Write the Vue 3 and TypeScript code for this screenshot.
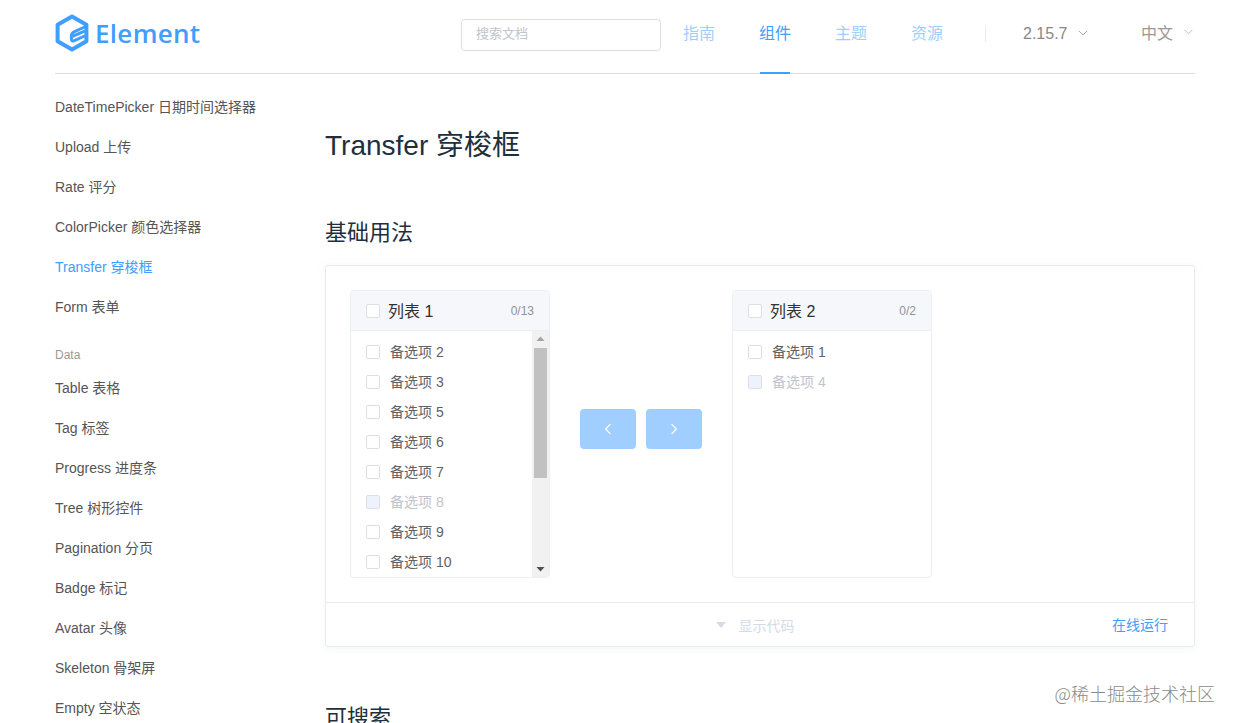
<script setup lang="ts">
interface NavLink { label: string; active?: boolean }
interface Option { label: string; disabled?: boolean }
interface SideEntry { label: string; active?: boolean; group?: boolean }

const navLinks: NavLink[] = [
  { label: '指南' },
  { label: '组件', active: true },
  { label: '主题' },
  { label: '资源' },
]

const sideEntries: SideEntry[] = [
  { label: 'DateTimePicker 日期时间选择器' },
  { label: 'Upload 上传' },
  { label: 'Rate 评分' },
  { label: 'ColorPicker 颜色选择器' },
  { label: 'Transfer 穿梭框', active: true },
  { label: 'Form 表单' },
  { label: 'Data', group: true },
  { label: 'Table 表格' },
  { label: 'Tag 标签' },
  { label: 'Progress 进度条' },
  { label: 'Tree 树形控件' },
  { label: 'Pagination 分页' },
  { label: 'Badge 标记' },
  { label: 'Avatar 头像' },
  { label: 'Skeleton 骨架屏' },
  { label: 'Empty 空状态' },
]

const leftOptions: Option[] = [
  { label: '备选项 2' },
  { label: '备选项 3' },
  { label: '备选项 5' },
  { label: '备选项 6' },
  { label: '备选项 7' },
  { label: '备选项 8', disabled: true },
  { label: '备选项 9' },
  { label: '备选项 10' },
]

const rightOptions: Option[] = [
  { label: '备选项 1' },
  { label: '备选项 4', disabled: true },
]
</script>

<template>
  <div class="page">
    <header class="header">
      <a class="brand">
        <svg class="brand-mark" viewBox="0 0 34 38" width="34" height="38" fill="none">
          <path d="M17 2.4 31.4 10.7V27.3L17 35.6 2.6 27.3V10.7Z" stroke="#409eff" stroke-width="4" stroke-linejoin="round" />
          <path d="M29.5 13 19.6 17.6Q16.4 19.2 16.4 21.8V25Q16.4 28 19.4 26.6L29.5 22" stroke="#409eff" stroke-width="3" stroke-linecap="round" />
          <path d="M18 22.2 29 17.4" stroke="#409eff" stroke-width="3" stroke-linecap="round" />
        </svg>
        <span class="brand-name">Element</span>
      </a>
      <div class="header-right">
        <div class="search">搜索文档</div>
        <nav class="nav">
          <a v-for="link in navLinks" :key="link.label" class="nav-link" :class="{ active: link.active }">
            <span class="nav-text">{{ link.label }}</span>
          </a>
        </nav>
        <span class="divider"></span>
        <span class="picker version">
          2.15.7
          <svg class="chev" viewBox="0 0 10 6" width="10" height="6" fill="none"><path d="M.8.8 5 5 9.2.8" stroke="#a8a8a8" stroke-width="1" /></svg>
        </span>
        <span class="picker lang">
          中文
          <svg class="chev" viewBox="0 0 10 6" width="9" height="6" fill="none"><path d="M.8.8 5 5 9.2.8" stroke="#b8b8b8" stroke-width="1" /></svg>
        </span>
      </div>
    </header>

    <div class="body">
      <aside class="side">
        <div
          v-for="entry in sideEntries"
          :key="entry.label"
          :class="entry.group ? 'side-group' : ['side-item', { active: entry.active }]"
        >{{ entry.label }}</div>
      </aside>

      <main class="main">
        <h2 class="title">Transfer 穿梭框</h2>
        <h3 class="section first">基础用法</h3>

        <section class="demo">
          <div class="source">
            <div class="panel">
              <div class="panel-head">
                <span class="box"></span>
                <span class="panel-title">列表 1</span>
                <span class="count">0/13</span>
              </div>
              <div class="panel-body">
                <ul class="list">
                  <li v-for="o in leftOptions" :key="o.label" class="option" :class="{ disabled: o.disabled }">
                    <span class="box"></span><span class="option-label">{{ o.label }}</span>
                  </li>
                </ul>
                <div class="scrollbar">
                  <svg class="arrow" viewBox="0 0 17 17" width="17" height="17"><path d="M8.5 5.5 12.5 10H4.5Z" fill="#a3a3a3" /></svg>
                  <div class="track"><div class="thumb"></div></div>
                  <svg class="arrow" viewBox="0 0 17 17" width="17" height="17"><path d="M8.5 11.5 12.5 7H4.5Z" fill="#505050" /></svg>
                </div>
              </div>
            </div>

            <div class="buttons">
              <button class="move" type="button">
                <svg viewBox="0 0 8 12" width="8" height="12" fill="none"><path d="M6.4 1.2 1.6 6l4.8 4.8" stroke="#fff" stroke-width="1.2" /></svg>
              </button>
              <button class="move" type="button">
                <svg viewBox="0 0 8 12" width="8" height="12" fill="none"><path d="M1.6 1.2 6.4 6l-4.8 4.8" stroke="#fff" stroke-width="1.2" /></svg>
              </button>
            </div>

            <div class="panel">
              <div class="panel-head">
                <span class="box"></span>
                <span class="panel-title">列表 2</span>
                <span class="count">0/2</span>
              </div>
              <div class="panel-body">
                <ul class="list">
                  <li v-for="o in rightOptions" :key="o.label" class="option" :class="{ disabled: o.disabled }">
                    <span class="box"></span><span class="option-label">{{ o.label }}</span>
                  </li>
                </ul>
              </div>
            </div>
          </div>

          <div class="meta">
            <span class="meta-toggle">
              <svg viewBox="0 0 10 6" width="10" height="6"><path d="M5 6 0 0H10Z" fill="#d3dce6" /></svg>
              显示代码
            </span>
            <a class="meta-run">在线运行</a>
          </div>
        </section>

        <h3 class="section last">可搜索</h3>
      </main>
    </div>

    <div class="watermark">@稀土掘金技术社区</div>
  </div>
</template>

<style>
html, body {
  margin: 0;
  overflow: hidden;
  background: #fff;
}
</style>

<style scoped>
.page {
  position: relative;
  height: 723px;
  overflow: hidden;
  padding: 0 40px 0 55px;
  box-sizing: border-box;
  font-family: "Liberation Sans", "Noto Sans CJK SC", sans-serif;
  color: #555;
}

.header {
  height: 74px;
  box-sizing: border-box;
  border-bottom: 1px solid #dcdfe6;
  display: flex;
  align-items: flex-start;
  justify-content: space-between;
}

.brand {
  display: flex;
  align-items: center;
  gap: 6px;
  height: 66px;
}
.brand-mark { display: block; }
.brand-name {
  font-family: "Open Sans", sans-serif;
  font-size: 26px;
  font-weight: 600;
  letter-spacing: 0.3px;
  color: #409eff;
  line-height: 40px;
}

.header-right {
  display: flex;
  align-items: flex-start;
  height: 73px;
}

.search {
  width: 200px;
  height: 32px;
  margin-top: 19px;
  box-sizing: border-box;
  border: 1px solid #dcdfe6;
  border-radius: 4px;
  padding-left: 14px;
  font-size: 13px;
  line-height: 28px;
  color: #c0c4cc;
}

.nav {
  display: flex;
  gap: 44px;
  margin-left: 22px;
}
.nav-link {
  display: block;
  position: relative;
  height: 74px;
  box-sizing: border-box;
  padding-top: 22px;
  font-size: 16px;
  line-height: 24px;
  color: #409eff;
}
.nav-text { display: block; opacity: 0.5; }
.nav-link.active .nav-text { opacity: 1; }
.nav-link.active::after {
  content: "";
  position: absolute;
  left: 1px;
  right: 1px;
  bottom: 0;
  height: 2px;
  background: #409eff;
}

.divider {
  width: 1px;
  height: 16px;
  margin: 26px 0 0 42px;
  background: #ebebeb;
}

.picker {
  display: flex;
  align-items: center;
  gap: 11px;
  height: 24px;
  margin-top: 22px;
  font-size: 16px;
  color: #888;
}
.version { margin-left: 37px; width: 118px; }
.lang { gap: 11px; color: #999; margin-top: 20px; padding-right: 2px; }
.chev { display: block; margin-top: -2px; }
.lang .chev { margin-top: 0; }

.body {
  display: flex;
  align-items: flex-start;
}

.side {
  width: 270px;
  flex: none;
  padding-top: 13px;
}
.side-item {
  height: 40px;
  line-height: 40px;
  font-size: 14px;
  color: #555;
  white-space: nowrap;
}
.side-item.active { color: #409eff; }
.side-group {
  height: 41px;
  padding-top: 18px;
  box-sizing: border-box;
  font-size: 12px;
  line-height: 20px;
  color: #999;
}

.main { flex: 1; min-width: 0; }

.title {
  margin: 51px 0 0;
  font-size: 28px;
  font-weight: 400;
  line-height: 42px;
  color: #1f2f3d;
}

.section {
  margin: 52px 0 0;
  font-size: 22px;
  font-weight: 400;
  line-height: 32px;
  color: #1f2f3d;
}
.section.first { margin-top: 50px; }
.section.last { margin-top: 55px; }

.demo {
  margin-top: 16px;
  border: 1px solid #ebebeb;
  border-radius: 3px;
  box-shadow: 0 2px 6px rgba(232, 237, 250, 0.5);
  box-sizing: border-box;
}

.source {
  display: flex;
  align-items: center;
  padding: 24px;
  border-bottom: 1px solid #ebebeb;
}

.panel {
  width: 200px;
  border: 1px solid #ebeef5;
  border-radius: 4px;
  box-sizing: border-box;
  overflow: hidden;
  background: #fff;
}

.panel-head {
  display: flex;
  align-items: center;
  height: 40px;
  box-sizing: border-box;
  padding: 0 15px;
  background: #f5f7fa;
  border-bottom: 1px solid #ebeef5;
}
.panel-title {
  margin-left: 8px;
  margin-top: -2px;
  font-size: 16px;
  color: #303133;
}
.count {
  margin-left: auto;
  font-size: 12px;
  color: #909399;
}

.box {
  width: 14px;
  height: 14px;
  flex: none;
  box-sizing: border-box;
  border: 1px solid #dcdfe6;
  border-radius: 2px;
  background: #fff;
}

.panel-body {
  display: flex;
  height: 246px;
}

.list {
  flex: 1;
  min-width: 0;
  margin: 0;
  padding: 6px 0 0;
  list-style: none;
  overflow: hidden;
}

.option {
  display: flex;
  align-items: center;
  height: 30px;
  padding-left: 15px;
  font-size: 14px;
  color: #606266;
}
.option-label { margin-left: 10px; margin-top: -2px; }
.option.disabled { color: #c0c4cc; }
.option.disabled .box {
  background: #edf2fc;
  border-color: #dcdfe6;
}

.scrollbar {
  width: 17px;
  flex: none;
  display: flex;
  flex-direction: column;
  background: #f1f1f1;
}
.arrow { display: block; flex: none; }
.track { flex: 1; padding: 0 2px; }
.thumb {
  height: 130px;
  background: #c1c1c1;
}

.buttons {
  display: flex;
  gap: 10px;
  padding: 0 30px 10px;
}
.move {
  width: 56px;
  height: 40px;
  padding: 0;
  border: 0;
  border-radius: 4px;
  background: #a0cfff;
  display: flex;
  align-items: center;
  justify-content: center;
}

.meta {
  position: relative;
  display: flex;
  align-items: center;
  justify-content: center;
  height: 43px;
}
.meta-toggle {
  display: flex;
  align-items: center;
  gap: 13px;
  margin-right: 10px;
  font-size: 14px;
  color: #d3dce6;
}
.meta-run {
  position: absolute;
  right: 26px;
  top: 12px;
  font-size: 14px;
  line-height: 20px;
  color: #409eff;
}

.watermark {
  position: absolute;
  right: 20px;
  top: 681px;
  font-size: 18px;
  line-height: 24px;
  color: #8a8a8a;
  font-family: "Noto Sans CJK SC", sans-serif;
  font-weight: 300;
}
</style>
